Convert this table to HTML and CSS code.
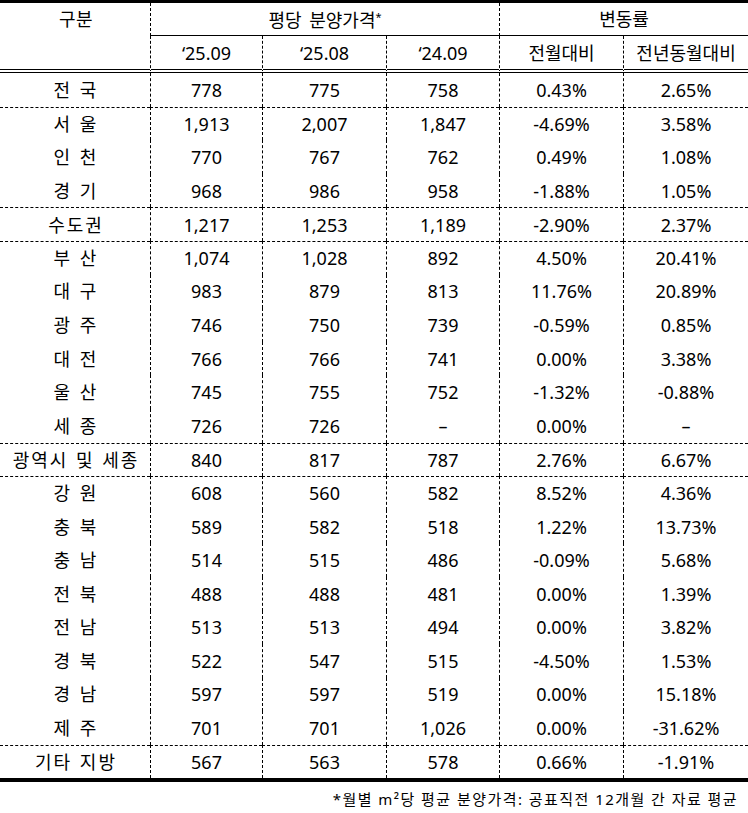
FILE: index.html
```html
<!DOCTYPE html>
<html lang="ko">
<head>
<meta charset="utf-8">
<link rel="stylesheet" href="styles.css">
</head>
<body>
<div class="page">
<table class="price">
  <colgroup>
    <col class="w-region">
    <col class="w-a">
    <col class="w-b">
    <col class="w-c">
    <col class="w-d">
    <col class="w-e">
  </colgroup>
  <thead>
    <tr class="h1">
      <th class="c1">구분</th>
      <th colspan="3" class="vl under">평당 분양가격<span class="star">*</span></th>
      <th colspan="2" class="vl under">변동률</th>
    </tr>
    <tr class="h2">
      <th class="c1"></th>
      <th class="vl">‘25.09</th>
      <th class="vl">‘25.08</th>
      <th class="vl">‘24.09</th>
      <th class="vl">전월대비</th>
      <th class="vl">전년동월대비</th>
    </tr>
  </thead>
  <tbody>
    <tr><td class="c1">전 국</td><td class="vl">778</td><td class="vl">775</td><td class="vl">758</td><td class="vl">0.43%</td><td class="vl">2.65%</td></tr>
    <tr class="sep"><td class="c1">서 울</td><td class="vl">1,913</td><td class="vl">2,007</td><td class="vl">1,847</td><td class="vl">-4.69%</td><td class="vl">3.58%</td></tr>
    <tr><td class="c1">인 천</td><td class="vl">770</td><td class="vl">767</td><td class="vl">762</td><td class="vl">0.49%</td><td class="vl">1.08%</td></tr>
    <tr><td class="c1">경 기</td><td class="vl">968</td><td class="vl">986</td><td class="vl">958</td><td class="vl">-1.88%</td><td class="vl">1.05%</td></tr>
    <tr class="sep"><td class="c1">수도권</td><td class="vl">1,217</td><td class="vl">1,253</td><td class="vl">1,189</td><td class="vl">-2.90%</td><td class="vl">2.37%</td></tr>
    <tr class="sep"><td class="c1">부 산</td><td class="vl">1,074</td><td class="vl">1,028</td><td class="vl">892</td><td class="vl">4.50%</td><td class="vl">20.41%</td></tr>
    <tr><td class="c1">대 구</td><td class="vl">983</td><td class="vl">879</td><td class="vl">813</td><td class="vl">11.76%</td><td class="vl">20.89%</td></tr>
    <tr><td class="c1">광 주</td><td class="vl">746</td><td class="vl">750</td><td class="vl">739</td><td class="vl">-0.59%</td><td class="vl">0.85%</td></tr>
    <tr><td class="c1">대 전</td><td class="vl">766</td><td class="vl">766</td><td class="vl">741</td><td class="vl">0.00%</td><td class="vl">3.38%</td></tr>
    <tr><td class="c1">울 산</td><td class="vl">745</td><td class="vl">755</td><td class="vl">752</td><td class="vl">-1.32%</td><td class="vl">-0.88%</td></tr>
    <tr><td class="c1">세 종</td><td class="vl">726</td><td class="vl">726</td><td class="vl">–</td><td class="vl">0.00%</td><td class="vl">–</td></tr>
    <tr class="sep"><td class="c1">광역시 및 세종</td><td class="vl">840</td><td class="vl">817</td><td class="vl">787</td><td class="vl">2.76%</td><td class="vl">6.67%</td></tr>
    <tr class="sep"><td class="c1">강 원</td><td class="vl">608</td><td class="vl">560</td><td class="vl">582</td><td class="vl">8.52%</td><td class="vl">4.36%</td></tr>
    <tr><td class="c1">충 북</td><td class="vl">589</td><td class="vl">582</td><td class="vl">518</td><td class="vl">1.22%</td><td class="vl">13.73%</td></tr>
    <tr><td class="c1">충 남</td><td class="vl">514</td><td class="vl">515</td><td class="vl">486</td><td class="vl">-0.09%</td><td class="vl">5.68%</td></tr>
    <tr><td class="c1">전 북</td><td class="vl">488</td><td class="vl">488</td><td class="vl">481</td><td class="vl">0.00%</td><td class="vl">1.39%</td></tr>
    <tr><td class="c1">전 남</td><td class="vl">513</td><td class="vl">513</td><td class="vl">494</td><td class="vl">0.00%</td><td class="vl">3.82%</td></tr>
    <tr><td class="c1">경 북</td><td class="vl">522</td><td class="vl">547</td><td class="vl">515</td><td class="vl">-4.50%</td><td class="vl">1.53%</td></tr>
    <tr><td class="c1">경 남</td><td class="vl">597</td><td class="vl">597</td><td class="vl">519</td><td class="vl">0.00%</td><td class="vl">15.18%</td></tr>
    <tr><td class="c1">제 주</td><td class="vl">701</td><td class="vl">701</td><td class="vl">1,026</td><td class="vl">0.00%</td><td class="vl">-31.62%</td></tr>
    <tr class="sep"><td class="c1">기타 지방</td><td class="vl">567</td><td class="vl">563</td><td class="vl">578</td><td class="vl">0.66%</td><td class="vl">-1.91%</td></tr>
  </tbody>
</table>
<p class="note">*월별 m²당 평균 분양가격: 공표직전 12개월 간 자료 평균</p>
</div>
</body>
</html>
```
FILE: styles.css
```css
html, body {
  margin: 0;
  padding: 0;
  background: #fff;
}
.page {
  width: 748px;
  font-family: "Noto Sans", "Noto Sans CJK KR", sans-serif;
  color: #000;
}
.price {
  width: 748px;
  border-collapse: separate;
  border-spacing: 0;
  table-layout: fixed;
  border-top: 3px solid #000;
  border-bottom: 4px solid #000;
}
.w-region { width: 150px; }
.w-a { width: 112px; }
.w-b { width: 124px; }
.w-c { width: 113px; }
.w-d { width: 124px; }
.w-e { width: 125px; }
.price th,
.price td {
  padding: 0;
  text-align: center;
  vertical-align: middle;
  font-weight: normal;
  font-size: 18px;
  line-height: 22px;
  white-space: nowrap;
  overflow: hidden;
}
.price .c1 {
  letter-spacing: 2px;
  word-spacing: 1px;
  padding-left: 2px;
}
.price thead .c1 {
  letter-spacing: 0.5px;
  word-spacing: 0;
}
.vl {
  border-left: 1px dashed #000;
}
.h1 { height: 33px; }
.h1 th { padding-bottom: 1px; word-spacing: 3px; }
.under { border-bottom: 1px solid #000; }
.h2 { height: 37px; }
.h2 th { border-bottom: 4px double #000; }
.h2 th.c1 { border-bottom: 4px double #000; }
.price tbody tr { height: 33.6px; }
.price tbody tr.sep td { border-top: 1px dashed #000; }
.star {
  font-size: 11px;
  vertical-align: 6px;
}
.note {
  margin: 0;
  padding: 6px 10px 0 0;
  text-align: right;
  font-size: 15px;
  line-height: 22px;
  letter-spacing: 1.45px;
}
```
